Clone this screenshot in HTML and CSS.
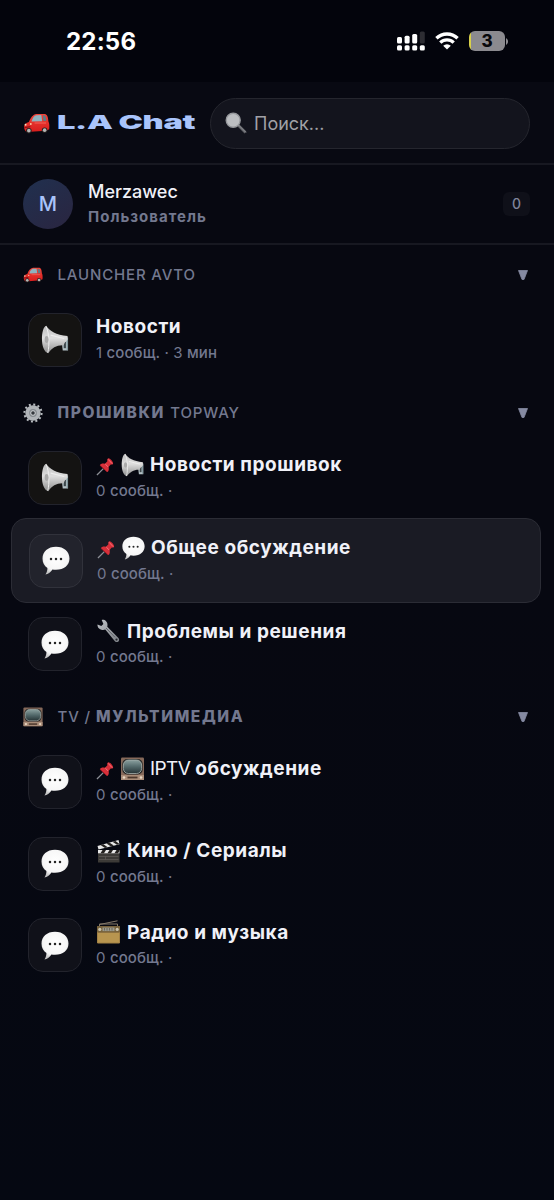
FILE: index.html
```html
<!DOCTYPE html>
<html lang="ru">
<head>
<meta charset="utf-8">
<title>L.A Chat</title>
<link rel="stylesheet" href="styles.css">
</head>
<body>
<svg class="defs" aria-hidden="true">
  <defs>
    <linearGradient id="gRed" x1="0" y1="0" x2="0" y2="1"><stop offset="0" stop-color="#f0453a"/><stop offset="1" stop-color="#d81c1c"/></linearGradient>
    <radialGradient id="gBubble" cx=".5" cy=".4" r=".6"><stop offset="0" stop-color="#fff"/><stop offset=".75" stop-color="#f6f6f6"/><stop offset="1" stop-color="#c4c4c4"/></radialGradient>
    <linearGradient id="gHorn" x1="0" y1="0" x2="0" y2="1"><stop offset="0" stop-color="#bdbdbd"/><stop offset=".45" stop-color="#dedede"/><stop offset="1" stop-color="#8d8d8d"/></linearGradient>
    <linearGradient id="gScreen" x1="0" y1="0" x2="0" y2="1"><stop offset="0" stop-color="#8aa09f"/><stop offset=".5" stop-color="#52686a"/><stop offset="1" stop-color="#263336"/></linearGradient>
    <linearGradient id="gSteel" x1="0" y1="0" x2="1" y2="1"><stop offset="0" stop-color="#bfc2c6"/><stop offset="1" stop-color="#7c8086"/></linearGradient>
  </defs>
  <symbol id="car" viewBox="0 0 28 22">
    <path d="M1 14c0-2 2-3.500 5-4.500C8 5 10 1.500 14 1h8c3 0 4 2 4.500 8 1 1.500 1.200 5 .8 8l-3 1.500L4 20c-2-.5-3-3-3-6z" fill="url(#gRed)"/>
    <path d="M8.800 8.800C10 5 11.500 2.600 14 2.300l5-.2 1 6.500z" fill="#8fb3bf"/>
    <path d="M20.600 2.300l2 .3c1.200.8 1.500 3 1.700 5.600l-3 .3z" fill="#5c7d88"/>
    <path d="M1.500 15.200l6-.8" stroke="#7e0c10" stroke-width="1.200"/>
    <path d="M12 10.500h12" stroke="#f8736a" stroke-width=".8"/>
    <circle cx="2.600" cy="12.300" r="1" fill="#f4dfc0"/><circle cx="8" cy="11.500" r="1" fill="#f4c9a0"/>
    <circle cx="6" cy="18.500" r="2.900" fill="#26201f"/><circle cx="6" cy="18.500" r="1.900" fill="#b5b5b5"/>
    <circle cx="22.500" cy="18" r="2.900" fill="#26201f"/><circle cx="22.500" cy="18" r="1.900" fill="#b5b5b5"/>
  </symbol>
  <symbol id="horn" viewBox="0 0 28 30">
    <path d="M20.500 13h7v13.500h-5.500z" fill="#b4c1c6"/>
    <path d="M23 17.500h2.300v6.500H23z" fill="#3d484b"/>
    <path d="M26.700 13.500v12.500" stroke="#6f8990" stroke-width="1"/>
    <path d="M5 .8C8.500 6.500 15 10 27 11.500v4c-2 1.500-3.500 3-4 5.500-7-.5-12 2.500-16 8.200C2.500 28 .5 21 .5 14.500S2 1.500 5 .8z" fill="url(#gHorn)"/>
    <path d="M4.800 1.500C8 8 8.500 21 6.500 28.700" fill="none" stroke="#f0f0f0" stroke-width="1"/>
    <ellipse cx="5.300" cy="15" rx="2" ry="3.500" fill="#aaa"/>
    <path d="M9.500 10.500l14 3.500" fill="none" stroke="#ededed" stroke-width="1.200"/>
  </symbol>
  <symbol id="bubble" viewBox="0 0 28 29">
    <path d="M14 .8c8 0 13.500 4.800 13.500 11.700S22 23.800 14 23.800c-1.500 0-2.500-.1-3.600-.4-1.300 2-3.300 4.300-6.900 5 1.300-2 2-4.300 1.900-6.500C2.200 19.800.5 16.800.5 12.500.5 5.600 6 .8 14 .8z" fill="url(#gBubble)"/>
    <circle cx="9" cy="13" r="1.250" fill="#252525"/><circle cx="14" cy="13" r="1.250" fill="#252525"/><circle cx="19" cy="13" r="1.250" fill="#252525"/>
  </symbol>
  <symbol id="pin" viewBox="0 0 20 20">
    <path d="M8 12L1 19" stroke="#8d9097" stroke-width="1.300"/>
    <path d="M12.500 1.500c1.500-1 6 3.500 5.500 5.500-.5 1-1.800.9-2.500.8l-2.300 2.700c.8 2.500 0 4.800-1.400 5.300L4 8.600C4.800 7 7 6.400 9.400 7L12 4.500c-.3-1-.3-2.200.5-3z" fill="#d8303a"/>
    <path d="M12.800 2.500l4.200 4.500M9.800 7.500l3 3" stroke="#f4747a" stroke-width="1"/>
    <path d="M4.500 9l7 6.500" stroke="#9f1824" stroke-width="1"/>
  </symbol>
  <symbol id="gear" viewBox="0 0 20 20">
    <circle cx="10" cy="10" r="8.600" fill="none" stroke="#b9bdc1" stroke-width="2" stroke-dasharray="2 2.500"/>
    <circle cx="10" cy="10" r="5.800" fill="#858a8f" stroke="#b0b4b8" stroke-width="3.800"/>
    <circle cx="10" cy="10" r="2.300" fill="#34383d" stroke="#d3d6d9" stroke-width="1"/>
  </symbol>
  <symbol id="tv" viewBox="0 0 24 24">
    <rect x=".5" y=".5" width="23" height="22.500" rx="1.200" fill="#86695a"/>
    <rect x=".5" y="18" width="23" height="5" fill="#a98c78"/>
    <rect x="1.800" y="2" width="20.400" height="15.500" rx="5" fill="#242626"/>
    <rect x="2.900" y="3" width="18.200" height="13.500" rx="5" fill="url(#gScreen)" stroke="#a9b2ae" stroke-width=".8"/>
    <circle cx="3.500" cy="20.500" r="1.300" fill="#ead8c3"/><circle cx="20.500" cy="20.500" r="1.300" fill="#ead8c3"/>
    <path d="M7 20.500h10" stroke="#4d382d" stroke-width="1.800"/>
  </symbol>
  <symbol id="wrench" viewBox="0 0 24 24">
    <path d="M1 5.500l3.800 1.600 2.100-2L5.200 1C8 .3 11 2.400 11 6l-.2 1.700 10.900 11c2.600 2.600-.8 6-3.300 3.500L8.800 10.600C5 12 .6 9.500 1 5.500z" fill="url(#gSteel)"/>
    <path d="M9.500 9l9 9.300" stroke="#5e6268" stroke-width="1"/>
    <circle cx="20" cy="20.600" r="1.100" fill="#24262b"/>
  </symbol>
  <symbol id="clap" viewBox="0 0 24 24">
    <path d="M1 7L22 1l1 4.200L2 10.500z" fill="#e8e8e8"/>
    <path d="M4 6.100l4.500 2.800 2.800-.7-4.500-3zM10 4.400l4.500 3 2.800-.8-4.500-3zM16 2.700l4.500 3 2.500-.6-4-3.100z" fill="#24211f"/>
    <rect x="1.500" y="11" width="21.500" height="12.500" fill="#3c3a37"/>
    <path d="M1.500 11H23v3.300H1.500z" fill="#e8e8e8"/>
    <path d="M4 14.300L6 11h3.500l-2 3.300zM11 14.300l2-3.300h3.500l-2 3.300zM18 14.300l2-3.300h3v1l-1.500 2.300z" fill="#24211f"/>
    <path d="M2.500 17.500h19.500M2.500 20.500h19.500M9 17.500v3" stroke="#66625e" stroke-width=".6"/>
  </symbol>
  <symbol id="radio" viewBox="0 0 24 24">
    <path d="M3 4.500L21 .8M3 6V4h18v3" fill="none" stroke="#84796a" stroke-width="1"/>
    <rect x=".5" y="6" width="23" height="17.500" rx="1.200" fill="#a28145"/>
    <rect x=".5" y="6" width="23" height="6.500" rx="1" fill="#76613b"/>
    <rect x="6" y="7.500" width="12" height="3.600" fill="#9a988b"/>
    <path d="M8 8v2.500M10.500 8v2.500M13 8v2.500M15.500 8v2.500" stroke="#555147" stroke-width=".7"/>
    <circle cx="3.300" cy="9.400" r="1.600" fill="#c9c2ad"/><circle cx="20.700" cy="9.400" r="1.600" fill="#c9c2ad"/>
    <path d="M1.500 13h21v9.500h-21z" fill="#b8954f"/>
  </symbol>
  <symbol id="lens" viewBox="0 0 22 22">
    <path d="M13 13l7.500 7.500" stroke="#64656a" stroke-width="2.600"/><path d="M13.500 13l7.500 7.500" stroke="#999a9e" stroke-width=".8"/>
    <circle cx="8.200" cy="8.200" r="7" fill="#bcbec1" stroke="#96989c" stroke-width="1.400"/>
  </symbol>
</svg>

<div class="status">
  <span class="clock">22:56</span>
  <svg class="cell" viewBox="0 0 28 20" width="28" height="20">
    <g fill="#fff"><rect x="0" y="6" width="5" height="6.500" rx="1.500"/><rect x="7.600" y="4.800" width="5" height="7.700" rx="1.500"/><rect x="15.200" y="3" width="5" height="9.500" rx="1.500"/>
    <rect x="0" y="14.300" width="5" height="5.200" rx="1.500"/><rect x="7.600" y="14.300" width="5" height="5.200" rx="1.500"/><rect x="15.200" y="14.300" width="5" height="5.200" rx="1.500"/><rect x="22.800" y="14.300" width="5" height="5.200" rx="1.500"/></g>
    <rect x="22.800" y=".5" width="5" height="12" rx="1.500" fill="#2d2d33"/>
  </svg>
  <svg class="wifi" viewBox="0 0 24 18" width="24" height="18">
    <g fill="none" stroke="#fff" stroke-width="3.300"><path d="M1.400 6.300a15.200 15.200 0 0 1 21.200 0"/><path d="M5.300 10.600a9.600 9.600 0 0 1 13.400 0"/></g>
    <path d="M12 17.500l-3.800-3.700a5.300 5.300 0 0 1 7.600 0z" fill="#fff"/>
  </svg>
  <span class="battery">3</span>
  <svg class="nub" viewBox="0 0 2 7" width="2" height="7"><path d="M0 0a4 4 0 0 1 0 7z" fill="#8b8a8f"/></svg>
</div>

<header class="top">
  <svg class="logo-car"><use href="#car"/></svg>
  <div class="brand"><span class="brand-text">L.A Chat</span></div>
  <div class="search"><svg class="lens"><use href="#lens"/></svg><span>Поиск...</span></div>
</header>

<section class="user">
  <div class="avatar">M</div>
  <div class="who"><div class="nick">Merzawec</div><div class="role">Пользователь</div></div>
  <div class="count">0</div>
</section>

<main>
  <div class="group"><svg class="g-ico"><use href="#car"/></svg><span class="g-name"><span class="lat">LAUNCHER AVTO</span></span><svg class="arrow" viewBox="0 0 10 10"><path d="M.5.5h9L6 9.500H4z"/></svg></div>
  <div class="row"><div class="tile news"><svg><use href="#horn"/></svg></div><div class="txt"><div class="title">Новости</div><div class="sub">1 <b>сообщ.</b> · 3 <b>мин</b></div></div></div>

  <div class="group"><svg class="g-ico"><use href="#gear"/></svg><span class="g-name"><b>ПРОШИВКИ</b> <span class="lat">TOPWAY</span></span><svg class="arrow" viewBox="0 0 10 10"><path d="M.5.5h9L6 9.500H4z"/></svg></div>
  <div class="row"><div class="tile news"><svg><use href="#horn"/></svg></div><div class="txt"><div class="title"><svg class="pin"><use href="#pin"/></svg><svg class="emo"><use href="#horn"/></svg>Новости прошивок</div><div class="sub">0 <b>сообщ.</b> ·</div></div></div>
  <div class="row active"><div class="tile"><svg><use href="#bubble"/></svg></div><div class="txt"><div class="title"><svg class="pin"><use href="#pin"/></svg><svg class="emo"><use href="#bubble"/></svg>Общее обсуждение</div><div class="sub">0 <b>сообщ.</b> ·</div></div></div>
  <div class="row"><div class="tile"><svg><use href="#bubble"/></svg></div><div class="txt"><div class="title"><svg class="emo solo"><use href="#wrench"/></svg>Проблемы и решения</div><div class="sub">0 <b>сообщ.</b> ·</div></div></div>

  <div class="group"><svg class="g-ico"><use href="#tv"/></svg><span class="g-name"><span class="lat">TV /</span> <b>МУЛЬТИМЕДИА</b></span><svg class="arrow" viewBox="0 0 10 10"><path d="M.5.5h9L6 9.500H4z"/></svg></div>
  <div class="row"><div class="tile"><svg><use href="#bubble"/></svg></div><div class="txt"><div class="title"><svg class="pin"><use href="#pin"/></svg><svg class="emo"><use href="#tv"/></svg><span class="iptv">IPTV</span>&nbsp;обсуждение</div><div class="sub">0 <b>сообщ.</b> ·</div></div></div>
  <div class="row"><div class="tile"><svg><use href="#bubble"/></svg></div><div class="txt"><div class="title"><svg class="emo solo"><use href="#clap"/></svg>Кино / Сериалы</div><div class="sub">0 <b>сообщ.</b> ·</div></div></div>
  <div class="row"><div class="tile"><svg><use href="#bubble"/></svg></div><div class="txt"><div class="title"><svg class="emo solo"><use href="#radio"/></svg>Радио и музыка</div><div class="sub">0 <b>сообщ.</b> ·</div></div></div>
</main>
</body>
</html>
```
FILE: styles.css
```css
* { box-sizing: border-box; }
body {
  margin: 0;
  height: 1200px;
  overflow: hidden;
  background: linear-gradient(#070811 0, #070811 600px, #050812 1200px);
  color: #f0f1f8;
  font-family: Inter, "Liberation Sans", sans-serif;
}
.defs { display: block; width: 0; height: 0; }
svg { flex: none; }

.status { display: flex; align-items: center; height: 82px; padding: 0 47px 0 66px; background: #03040c; }
.clock { font-size: 24px; font-weight: 700; letter-spacing: .2px; color: #fff; margin-right: auto; }
.cell { margin-right: 10px; }
.wifi { margin-right: 10px; }
.battery { width: 36px; height: 20px; border-radius: 6px; background: linear-gradient(90deg, #d8d04a 2px, #8b8a8f 2px); color: #08080c; font-size: 17px; line-height: 20px; font-weight: 800; text-align: center; }
.nub { margin-left: 1px; margin-right: -1px; }

.top { display: flex; align-items: center; height: 83px; padding: 1px 24px 0 23px; border-bottom: 2px solid #171821; background: #080912; }
.logo-car { width: 27px; height: 21px; margin-right: 7px; }
.brand { width: 138px; margin-right: 15px; }
.brand-text { display: inline-block; font-size: 19px; line-height: 24px; font-weight: 900; letter-spacing: -.2px; color: #a9c4fb; transform: scaleX(1.715); transform-origin: left; white-space: nowrap; }
.search { flex: 1; display: flex; align-items: center; height: 51px; padding-left: 14px; border: 1.500px solid #25262e; border-radius: 26px; background: #13141d; font-size: 18px; color: #a0a1a6; }
.lens { width: 22px; height: 22px; margin-right: 7px; }

.user { display: flex; align-items: center; height: 80px; padding: 0 24px 0 23px; border-bottom: 2px solid #171821; }
.avatar { width: 50px; height: 50px; border-radius: 50%; background: linear-gradient(145deg, #20304f, #2a2540); color: #a9c4fb; font-size: 20px; line-height: 50px; font-weight: 500; text-align: center; margin-right: 15px; }
.nick { font-size: 18px; line-height: 24px; font-weight: 500; }
.role { font-size: 15px; line-height: 22px; margin-top: 2px; font-weight: 700; letter-spacing: 1px; color: #73788f; }
.count { margin-left: auto; width: 27px; height: 24px; border-radius: 6px; background: #0f1019; color: #7f849b; font-size: 14px; line-height: 24px; font-weight: 500; text-align: center; }

.group { display: flex; align-items: center; height: 56px; padding: 8px 26px 0 23px; color: #73788f; }
.group:first-child { height: 54px; padding-top: 6px; }
.g-ico { width: 20px; height: 20px; margin-right: 14.500px; }
.g-name { font-size: 15px; line-height: 20px; letter-spacing: 1px; white-space: pre; }
.g-name b { font-size: 15.500px; font-weight: 800; letter-spacing: 1.600px; }
.lat { font-weight: 450; letter-spacing: .85px; }
.arrow { margin-left: auto; width: 10px; height: 10px; fill: #858aa2; stroke: #858aa2; stroke-width: .8; stroke-linejoin: round; }

.row { display: flex; align-items: center; height: 81.700px; padding: 0 28px; }
.row.active { height: 85px; margin: 0 13px 0 11px; padding: 0 17px; border: 1.500px solid #2b2c35; border-radius: 15px; background: #1a1b24; }
.tile { display: flex; align-items: center; justify-content: center; width: 54px; height: 54px; margin-right: 14px; border: 1.500px solid #22232c; border-radius: 15px; background: #101119; }
.tile svg { width: 28px; height: 29px; }
.tile.news { background: #141312; }
.active .tile { background: #22232c; border-color: #31323b; }
.txt { padding-bottom: 2px; }
.title { display: flex; align-items: center; height: 26px; font-size: 19px; font-weight: 750; letter-spacing: .56px; white-space: nowrap; }
.iptv { font-weight: 400; letter-spacing: -.6px; }
.pin { width: 19px; height: 19px; margin: 3px 5px 0 0; }
.emo { width: 25px; height: 24px; margin-right: 5px; }
.solo { margin-right: 6px; }
.sub { margin-top: 2px; font-size: 15px; line-height: 22px; letter-spacing: .1px; color: #73788f; }
.sub b { font-weight: 550; }
```
